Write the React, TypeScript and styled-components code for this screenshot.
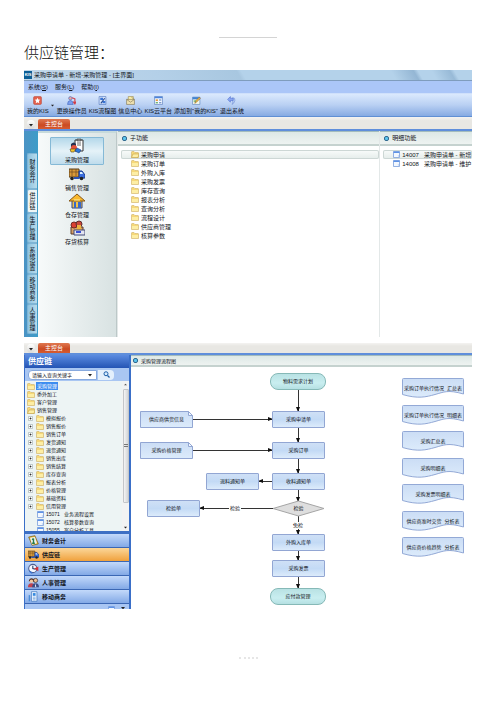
import React from "react";
import styled, { createGlobalStyle, css } from "styled-components";

const GlobalStyle = createGlobalStyle`
  * { box-sizing: border-box; }
  body {
    margin: 0;
    background: #fff;
    color: #10131a;
    font-family: "Liberation Sans", "Noto Sans CJK SC", sans-serif;
    font-size: 6px;
    line-height: 8px;
  }
  button, input { font: inherit; color: inherit; margin: 0; padding: 0; border: 0; background: none; }
  ul { margin: 0; padding: 0; list-style: none; }
  svg { display: block; flex: none; }
`;

const Page = styled.main`
  min-height: 100vh;
  padding: 37px 24px 0;
  display: flex;
  flex-direction: column;
`;
const HeaderRule = styled.hr`
  width: 58px;
  margin: 0 0 0 195px;
  border: 0;
  border-top: 1px solid #d4d4d4;
`;
const Title = styled.h1`
  margin: 3px 0 7px;
  font: 300 15px/22px "Noto Sans CJK SC", sans-serif;
  color: #111;
`;
const Frame = styled.section`
  display: flex;
  flex-direction: column;
  overflow: hidden;
  margin-bottom: 6px;
`;
const TitleBar = styled.header`
  height: 11px;
  display: flex;
  align-items: center;
  gap: 2px;
  white-space: pre;
  border-bottom: 1px solid #7f9cbd;
  background: linear-gradient(60deg, #c3d9ea 0, #b4d0e8 30%, #a8c7e0 48%, #b4d2ea 49%, #b4d2ea 82%, #94b6d4 87%, #b4d2ea 88%, #b4d2ea 91%, #98bad7 95%, #b4d2ea 96%);
`;
const Logo = styled.span`
  width: 8px;
  height: 8px;
  background: #0d5f96;
  color: #fff;
  font: bold 4px/8px "Liberation Sans", sans-serif;
  text-align: center;
`;
const MenuBar = styled.nav`
  height: 12px;
  display: flex;
  align-items: center;
  gap: 7px;
  padding-left: 4px;
  background: #abc6f8;
`;
const MenuButton = styled.button`white-space: nowrap;`;
const ToolBar = styled.div`
  height: 24px;
  display: flex;
  align-items: center;
  gap: 2px;
  padding-left: 3px;
  border-top: 1px solid #cfe0fb;
  border-bottom: 1px solid #5f8fd4;
  background: linear-gradient(#dbe9fd, #b9d0f3 50%, #86aae2);
`;
const ToolButton = styled.button<{ $after?: boolean }>`
  display: flex;
  flex-direction: column;
  align-items: center;
  gap: 2px;
  white-space: nowrap;
  ${(p) => p.$after && css`margin-left: 1px;`}
`;
const TabBar = styled.div<{ $low?: boolean }>`
  height: ${(p) => (p.$low ? 10 : 12)}px;
  display: flex;
  align-items: flex-end;
  gap: 3px;
  padding-left: 3px;
  background: linear-gradient(#f4f3f1, #e8e7e3 30%);
`;
const RoundButton = styled.button`
  width: 8px;
  height: 9px;
  display: grid;
  place-items: center;
  border-radius: 4px;
  background: linear-gradient(#fff, #d8d8d6);
`;
const MainTab = styled.button`
  width: 32px;
  height: 10px;
  color: #fff;
  line-height: 10px;
  border-radius: 2px 2px 0 0;
  background: linear-gradient(#e07850, #cb4a22 60%, #d65c30);
`;
const Body = styled.div<{ $high?: boolean }>`
  display: flex;
  border-top: 2px solid #5f8edb;
  min-height: ${(p) => (p.$high ? 208 : 256)}px;
`;
const Rail = styled.div`
  flex: none;
  width: 14px;
  padding: 22px 1px 2px 3px;
  background: linear-gradient(90deg, #4b93c4, #3d9cc8);
`;
const RailTab = styled.button<{ $h: number; $on?: boolean }>`
  display: block;
  width: 10px;
  height: ${(p) => p.$h}px;
  writing-mode: vertical-rl;
  text-orientation: upright;
  line-height: 10px;
  text-align: center;
  border: 1px solid #7fb5d5;
  border-right: 0;
  border-radius: 2px 0 0 2px;
  background: ${(p) => (p.$on ? "#eef5f6" : "linear-gradient(90deg, #8fc3e0, #b9dcec)")};
`;
const ModulePane = styled.div`
  flex: none;
  width: 79px;
  display: flex;
  flex-direction: column;
  align-items: center;
  padding-top: 4px;
  border-right: 1px solid #bcc8c8;
  border-top: 2px solid #c7dadb;
  background: linear-gradient(90deg, #f7fafa, #d8e2e2);
`;
const ModuleButton = styled.button<{ $on?: boolean }>`
  width: 54px;
  height: ${(p) => (p.$on ? 28 : 27)}px;
  display: flex;
  flex-direction: column;
  align-items: center;
  justify-content: center;
  gap: 2px;
  border: 1px solid ${(p) => (p.$on ? "#85b9d6" : "transparent")};
  border-radius: 1px;
  ${(p) => p.$on && css`background: linear-gradient(#b4d8ea, #e5f2f8 50%, #bfdcec);`}
`;
const Column = styled.section<{ $grow: number }>`
  flex: ${(p) => p.$grow} 1 0;
  min-width: 0;
  overflow: hidden;
  border-left: 1px solid #e3e8e8;
`;
const PaneHead = styled.h2<{ $small?: boolean }>`
  margin: 0;
  height: ${(p) => (p.$small ? 12 : 15)}px;
  display: flex;
  align-items: center;
  gap: 3px;
  padding-left: ${(p) => (p.$small ? 2 : 4)}px;
  font-size: ${(p) => (p.$small ? 5 : 6)}px;
  font-weight: 400;
  border-top: 1px solid #a3bcbd;
  border-bottom: 2px solid #c5d2cf;
  background: linear-gradient(#dde8e6, #eef3f1);
`;
const Bullet = styled.i`
  width: 5px;
  height: 5px;
  border: 1px solid #31688e;
  border-radius: 2px;
  background: #5cc6ee;
`;
const FnList = styled.ul`padding: 4px 0 0 3px;`;
const FnButton = styled.button<{ $on?: boolean }>`
  width: 100%;
  height: 9px;
  display: flex;
  align-items: center;
  gap: 2px;
  padding-left: 10px;
  white-space: pre;
  border-radius: 2px;
  ${(p) => p.$on && css`
    background: linear-gradient(#fafcfb, #e4ecea);
    box-shadow: inset 0 0 0 1px #cdd7d5;
  `}
`;
const Side = styled.aside`
  flex: none;
  width: 107px;
  height: 254px;
  display: flex;
  flex-direction: column;
  border: solid #3a6fc8;
  border-width: 0 2px 0 1px;
  font-size: 5px;
`;
const SideTitle = styled.h2`
  margin: 0;
  padding-left: 3px;
  font-size: 8px;
  line-height: 13px;
  color: #fff;
  background: linear-gradient(#5b8be0, #2454b4);
`;
const Search = styled.form`
  flex: none;
  height: 13px;
  display: flex;
  align-items: center;
  gap: 1px;
  padding-left: 3px;
  background: #a9c6f2;
`;
const SearchBox = styled.div`
  width: 69px;
  height: 10px;
  display: flex;
  align-items: center;
  padding: 0 4px 0 3px;
  border: 1px solid #86a9de;
  border-radius: 4px 0 0 4px;
  background: #fff;
`;
const SearchInput = styled.input`
  flex: 1;
  min-width: 0;
  height: 8px;
  outline: 0;
`;
const SearchButton = styled.button`
  width: 16px;
  height: 10px;
  display: grid;
  place-items: center;
  border-radius: 0 4px 4px 0;
  background: #e4f0fc;
`;
const TreeWrap = styled.div`
  flex: 1;
  min-height: 0;
  display: flex;
  overflow: hidden;
  background: #edf4f4;
`;
const Tree = styled.ul`
  flex: 1;
  min-width: 0;
  padding: 1px 0 0 2px;
`;
const TreeItem = styled.li<{ $level: number }>`
  height: 8px;
  display: flex;
  align-items: center;
  gap: 1px;
  padding-left: ${(p) => (p.$level === 2 ? 10 : 0)}px;
  white-space: pre;
`;
const TreeLabel = styled.button<{ $on?: boolean }>`
  padding: 0 1px;
  white-space: pre;
  ${(p) => p.$on && css`color: #fff; background: #3c8cf0;`}
`;
const Expander = styled.button`
  width: 5px;
  height: 5px;
  margin: 0 2px 0 1px;
`;
const Scroll = styled.div`
  width: 7px;
  display: flex;
  flex-direction: column;
  align-items: center;
  justify-content: space-between;
  padding: 2px 0;
  background: #f2f3f3;
`;
const Thumb = styled.div`
  width: 6px;
  height: 114px;
  display: grid;
  place-items: center;
  margin-bottom: 20px;
  border: 1px solid #c3c6c9;
  border-radius: 1px;
  background: linear-gradient(90deg, #f4f4f4, #d2d5d8);
`;
const Splitter = styled.div`
  flex: none;
  height: 3px;
  background: #3d6fc4;
`;
const NavButton = styled.button<{ $on?: boolean }>`
  flex: none;
  height: 14px;
  display: flex;
  align-items: center;
  gap: 3px;
  padding-left: 3px;
  font-size: 6px;
  font-weight: 700;
  border-bottom: 1px solid #3b67b4;
  background: ${(p) => (p.$on ? "linear-gradient(#fbd79a, #f0a13c)" : "linear-gradient(#c3d9fa, #83a9e6)")};
`;
const NavFoot = styled.div`
  flex: none;
  height: 5px;
  overflow: hidden;
  display: flex;
  justify-content: flex-end;
  gap: 6px;
  padding: 2px 4px 0;
  background: #a9c6f3;
`;
const Flow = styled.section`
  flex: 1;
  min-width: 0;
  font-size: 5px;
`;
const Canvas = styled.div`
  position: relative;
  overflow: hidden;
  height: 242px;
`;
const Links = styled.svg`
  position: absolute;
  left: 0;
  top: 0;
`;
const nodeFill = "linear-gradient(#cfe0f6, #c3daf5 50%, #dcebfb)";
const Node = styled.div<{ $x: number; $y: number; $kind?: "round" | "plain" }>`
  position: absolute;
  left: ${(p) => p.$x}px;
  top: ${(p) => p.$y}px;
  width: ${(p) => (p.$kind === "round" ? 56 : 53)}px;
  height: 17px;
  line-height: 15px;
  text-align: center;
  white-space: nowrap;
  ${(p) =>
    p.$kind === "round"
      ? css`
          border: 1px solid #86b9b7;
          border-radius: 8px;
          background: linear-gradient(#b9e2e4, #c9eef0 60%, #b5e0e2);
        `
      : p.$kind === "plain"
      ? css`border: 1px solid transparent;`
      : css`
          border: 1px solid #92a6d3;
          border-radius: 1px;
          background: ${nodeFill};
        `}
`;
const Caption = styled.span<{ $x: number; $y: number }>`
  position: absolute;
  left: ${(p) => p.$x}px;
  top: ${(p) => p.$y}px;
  width: 12px;
  text-align: center;
  line-height: 7px;
  background: #fff;
`;
const Reports = styled.div`
  position: absolute;
  left: 271px;
  top: 11px;
  height: 179px;
  display: flex;
  flex-direction: column;
  justify-content: space-between;
`;
const Report = styled.div`
  width: 62px;
  height: 20px;
  display: grid;
  white-space: pre;
  text-align: center;
  line-height: 20px;
  > * { grid-area: 1 / 1; }
`;
const Footer = styled.footer`
  margin: 42px 0 0 215px;
  width: 19px;
  border-top: 2px dotted #e6e6e6;
`;

const Caret = ({ size = 4 }: { size?: number }) => (
  <svg width={size} height={size} viewBox="0 0 4 4"><path d="M0 1h4L2 3.4z" fill="#222" /></svg>
);
const Folder = ({ open }: { open?: boolean }) => (
  <svg width="8" height="7" viewBox="0 0 16 14">
    <path d="M1 13V2q0-1 1-1h4l2 2h6q1 0 1 1v9z" fill="#f6d878" stroke="#c9a95a" />
    <path d={open ? "M1 13 4 6h12l-2 7z" : "M2 6h12v6H2z"} fill="#fdeea4" stroke={open ? "#b9963c" : "none"} />
  </svg>
);
const Doc = () => (
  <svg width="7" height="7" viewBox="0 0 14 14">
    <path d="M1 1h12v12H1z" fill="#f3f8ff" stroke="#7b9edb" strokeWidth="1.6" />
    <path d="M1 1h12v3H1z" fill="#5f93e6" />
    <path d="M9 9h3v3z" fill="#a9c4ee" />
  </svg>
);

const toolArt: Record<string, React.ReactNode> = {
  star: <><rect x="1" y="1" width="14" height="14" rx="2" fill="#e4604c" stroke="#b84a3c" /><path d="m8 3 1.5 3.4 3.5.4-2.600 2.300.7 3.700L8 11l-3.100 1.800.7-3.700L3 6.800l3.500-.4z" fill="#fff" /></>,
  users: <><circle cx="6" cy="4" r="3" fill="#e9a9a3" stroke="#395fba" /><path d="M1 15q0-7 5-7t5 7z" fill="#7da0ef" stroke="#395fba" /><path d="m9 3 5 2v8m-3-3 3 4 2-4" fill="none" stroke="#d23c47" strokeWidth="2" /></>,
  flow: <><path d="M2 1h12v14H2z" fill="#dbe8fc" stroke="#3f68b6" /><path d="M4 3h5v4H4zm4 6h5v4H8z" fill="#3974d4" /><path d="m5 13 7-9" stroke="#294b91" strokeWidth="2" /></>,
  mail: <><path d="M4 1h9v9H4z" fill="#fff2a8" stroke="#8d7b42" /><path d="M1 6h14v9H1z" fill="#eee1b0" stroke="#786d49" /><path d="m1 6 7 5 7-5M10 2l3 3" fill="none" stroke="#786d49" /></>,
  cloud: <><path d="M1 1h14v14H1z" fill="#f4f8ff" stroke="#486fb6" /><path d="M1 1h14v3H1z" fill="#4d84da" /><path d="M3 6h4v3H3z" fill="#e89b39" /><path d="M3 11h4v2H3z" fill="#54a650" /><path d="M9 7h4M9 12h4" stroke="#5579b6" strokeWidth="2" /></>,
  add: <><path d="M1 2h13v13H1z" fill="#f4f8e9" stroke="#4b75b7" /><path d="M1 2h13v4H1z" fill="#3f83d3" /><path d="m5 13 1-4 7-7 2 2-7 7z" fill="#efb844" stroke="#8e632e" /><path d="M3 8h4v2H3z" fill="#51a35a" /></>,
  exit: <><path d="M10 3q5 0 4 5t-5 7q2-4 1-7z" fill="#b9cff3" stroke="#6f8bd5" /><path d="M1 6 6 1v3h5v4H6v3z" fill="#8ba7f0" stroke="#4e6fd0" /></>,
};
const moduleArt: Record<string, React.ReactNode> = {
  clipboard: <><path d="M6 2h8v11H6z" fill="#fff" stroke="#333" /><path d="M8 1h4v2H8z" fill="#999" stroke="#333" strokeWidth=".6" /><path d="M8 5h4M8 7h4" stroke="#444" strokeWidth=".8" /><path d="M2 6q3-3 5 0v3H2z" fill="#24314f" /><circle cx="5" cy="10" r="3" fill="#e6523a" /><path d="M1 11h6l-2 3H2z" fill="#f4c62e" stroke="#51401d" strokeWidth=".6" /><path d="m8 10 4 2-2 3-4-2z" fill="#2b79dc" stroke="#173c7d" strokeWidth=".6" /></>,
  truck: <><path d="M0 3h10v8H0z" fill="#d99a38" stroke="#5b3f1d" /><path d="M0 6h10M3 3v7M7 3v7" stroke="#6e4920" strokeWidth=".7" /><path d="M10 5h3l3 4v3h-6z" fill="#3a6ddd" stroke="#1b3c8c" /><path d="M11 6h2l1 2h-3z" fill="#d9efff" /><circle cx="3" cy="12.500" r="1.800" fill="#222" /><circle cx="12.500" cy="12.500" r="1.800" fill="#222" /><path d="M5 12h5" stroke="#2852b5" strokeWidth="2" /></>,
  house: <><path d="M3 7h10v8H3z" fill="#f2c34c" stroke="#344480" /><path d="M0 8 8 1l8 7z" fill="#f8b82d" stroke="#865819" /><path d="M5 9h2v6H5zm4 0h3v6H9z" fill="#3868c7" /><path d="M5 7h6" stroke="#fff1a2" /></>,
  boxes: <><path d="M2 7h12v7H2z" fill="#d6a066" stroke="#5a3a26" /><circle cx="5" cy="5" r="3" fill="#db4031" stroke="#702b24" /><circle cx="10" cy="4" r="3" fill="#c9473a" stroke="#5e2e2e" /><path d="M8 5h4v5H8z" fill="#efb33d" /><path d="M5 10h11v5H5z" fill="#e3e5f1" stroke="#424b76" /><path d="M7 12h5" stroke="#3a50d7" strokeWidth="2" /></>,
  book: <><path d="m1 3 9-2 5 12-9 2z" fill="#f1bd2c" stroke="#705814" /><path d="m3 4 7-1 3 9-7 2z" fill="#eef3f2" /><path d="M8 5v7m-2-5 2-2m-2 7h4" stroke="#257c4a" strokeWidth="2" fill="none" /></>,
  clock: <><circle cx="7" cy="8" r="6" fill="#f6f8ff" stroke="#4d5f91" strokeWidth="1.500" /><path d="M7 4v4l4 1" fill="none" stroke="#25365f" strokeWidth="1.500" /><path d="m9 8 6-3v7z" fill="#d62f37" /><path d="M2 12l4 3" stroke="#3974d4" strokeWidth="2" /></>,
  people: <><path d="M1 6q1-5 5-4 4 0 3 5z" fill="#4b2d24" /><circle cx="5" cy="6" r="2.500" fill="#f3c7a2" /><path d="M0 15q0-6 5-6t5 6z" fill="#c3434e" /><circle cx="11" cy="5" r="3" fill="#edbd94" stroke="#342822" /><path d="M6 15q0-6 5-6t5 6z" fill="#3e4c84" /><path d="m11 9-1 5h2z" fill="#fff" /></>,
  phone: <><path d="M5 1h8v14H5z" fill="#edf5ff" stroke="#3e76bd" /><path d="M7 3h4v4H7z" fill="#3689df" /><path d="M7 9h4M7 11h4M7 13h4" stroke="#6d9ed8" /><path d="M2 6v9" stroke="#4a8dd8" strokeWidth="2" /></>,
};
const Art = ({ name, size }: { name: string; size: number }) => (
  <svg width={size} height={size} viewBox="0 0 16 16">{toolArt[name] ?? moduleArt[name]}</svg>
);

const tools = [
  ["star", "我的KIS"], ["users", "更换操作员"], ["flow", "KIS流程图"], ["mail", "信息中心"],
  ["cloud", "KIS云平台"], ["add", "添加到\"我的KIS\""], ["exit", "退出系统"],
];
const rails: [string, number][] = [["财务会计", 36], ["供应链", 24], ["生产管理", 30], ["系统设置", 31], ["移动商务", 30], ["人事管理", 30]];
const modules = [["clipboard", "采购管理"], ["truck", "销售管理"], ["house", "仓存管理"], ["boxes", "存货核算"]];
const functions = ["采购申请", "采购订单", "外购入库", "采购发票", "库存查询", "报表分析", "查询分析", "流程设计", "供应商管理", "核算参数"];
const treeTop = ["采购管理", "委外加工", "客户管理", "销售管理"];
const treeSub = ["模拟报价", "销售报价", "销售订单", "发货通知", "退货通知", "销售出库", "销售结算", "库存查询", "报表分析", "价格管理", "基础资料", "信用管理"];
const treeDocs = ["15071   业务流程设置", "15072   核算参数查询", "15055   客户分析工具"];
const navs = [["book", "财务会计"], ["truck", "供应链"], ["clock", "生产管理"], ["people", "人事管理"], ["phone", "移动商务"]];
const reports = ["采购订单执行情况  汇总表", "采购订单执行情况  明细表", "采购汇总表", "采购明细表", "采购发票明细表", "供应商准时交货  分析表", "供应商价格趋势  分析表"];

const ConsoleTabs = ({ low }: { low?: boolean }) => (
  <TabBar $low={low}>
    <RoundButton aria-label="菜单"><Caret /></RoundButton>
    <MainTab>主控台</MainTab>
  </TabBar>
);

const arrows = [
  "M167 23V44", "M167 61V75", "M167 92V106", "M167 123V134", "M167 149V167", "M167 184V193", "M167 210V221",
  "M62 52H141", "M62 83H141", "M141 114H128", "M142 141H69",
];

const FlowChart = () => (
  <Canvas>
    <Links width="341" height="242" viewBox="0 0 341 242">
      <defs>
        <marker id="tip" markerUnits="userSpaceOnUse" markerWidth="6" markerHeight="6" refX="4" refY="2" orient="auto">
          <path d="M0 0 5 2 0 4z" fill="#111" />
        </marker>
        <linearGradient id="sheet" x2="0" y2="1">
          <stop stopColor="#cbddf5" /><stop offset="1" stopColor="#dcebfb" />
        </linearGradient>
      </defs>
      {arrows.map((d) => <path key={d} d={d} stroke="#333" strokeWidth="1" fill="none" shapeRendering="crispEdges" markerEnd="url(#tip)" />)}
      <path d="m142 141.500 25.500-7.500 25.500 7.500-25.500 7.500z" fill="#dedede" stroke="#a5a5a5" />
      {[44, 75].map((y) => (
        <g key={y} transform={`translate(9 ${y})`} stroke="#92a6d3">
          <path d="M.5.5h48l4 4v12H.5z" fill="url(#sheet)" />
          <path d="M48.500.5v4h4z" fill="#f4f9ff" />
        </g>
      ))}
    </Links>
    <Node $x={139} $y={6} $kind="round">物料需求计划</Node>
    <Node $x={141} $y={44}>采购申请单</Node>
    <Node $x={9} $y={44} $kind="plain">供应商供货信息</Node>
    <Node $x={141} $y={75}>采购订单</Node>
    <Node $x={9} $y={75} $kind="plain">采购价格管理</Node>
    <Node $x={141} $y={106}>收料通知单</Node>
    <Node $x={75} $y={106}>退料通知单</Node>
    <Node $x={16} $y={133}>检验单</Node>
    <Node $x={141} $y={133} $kind="plain">检验</Node>
    <Node $x={141} $y={167}>外购入库单</Node>
    <Node $x={141} $y={193}>采购发票</Node>
    <Node $x={139} $y={221} $kind="round">应付款管理</Node>
    <Caption $x={98} $y={138}>检验</Caption>
    <Caption $x={161} $y={155}>免检</Caption>
    <Reports>
      {reports.map((r) => (
        <Report key={r}>
          <svg width="62" height="20" viewBox="0 0 62 20">
            <path d="M.5 16.500V1.500q0-1 1-1h59q1 0 1 1v14.500C46 11.500 42 14 33 16.500S16 21 .5 16.500z" fill="url(#sheet)" stroke="#93a9d6" />
          </svg>
          <span>{r}</span>
        </Report>
      ))}
    </Reports>
  </Canvas>
);

export default function App() {
  return (
    <Page>
      <GlobalStyle />
      <HeaderRule />
      <Title>供应链管理：</Title>

      <Frame>
        <TitleBar><Logo>KIS</Logo>采购申请单 - 新增-采购管理 - [主界面]</TitleBar>
        <MenuBar>
          {["系统(S)", "服务(L)", "帮助(I)"].map((m) => (
            <MenuButton key={m}>{m.slice(0, 3)}<u>{m[3]}</u>)</MenuButton>
          ))}
        </MenuBar>
        <ToolBar>
          {tools.map(([icon, label], i) => (
            <React.Fragment key={icon}>
              <ToolButton $after={i === 1}><Art name={icon} size={9} />{label}</ToolButton>
              {i === 0 && <Caret size={3} />}
            </React.Fragment>
          ))}
        </ToolBar>
        <ConsoleTabs />
        <Body $high>
          <Rail>
            {rails.map(([label, h]) => <RailTab key={label} $h={h} $on={label === "供应链"}>{label}</RailTab>)}
          </Rail>
          <ModulePane>
            {modules.map(([icon, label], i) => (
              <ModuleButton key={icon} $on={i === 0}><Art name={icon} size={16} />{label}</ModuleButton>
            ))}
          </ModulePane>
          <Column $grow={74}>
            <PaneHead><Bullet />子功能</PaneHead>
            <FnList>
              {functions.map((f, i) => <li key={f}><FnButton $on={i === 0}><Folder open={i === 0} />{f}</FnButton></li>)}
            </FnList>
          </Column>
          <Column $grow={26}>
            <PaneHead><Bullet />明细功能</PaneHead>
            <FnList>
              <li><FnButton $on><Doc />14007   采购申请单 - 新增</FnButton></li>
              <li><FnButton><Doc />14008   采购申请单 - 维护</FnButton></li>
            </FnList>
          </Column>
        </Body>
      </Frame>

      <Frame>
        <ConsoleTabs low />
        <Body>
          <Side>
            <SideTitle>供应链</SideTitle>
            <Search onSubmit={(e) => e.preventDefault()}>
              <SearchBox>
                <SearchInput aria-label="查询关键字" defaultValue="请输入查询关键字" />
                <Caret />
              </SearchBox>
              <SearchButton aria-label="查询">
                <svg width="7" height="7" viewBox="0 0 14 14"><circle cx="6" cy="5.500" r="4" fill="#d5ecff" stroke="#1d5fa8" strokeWidth="2" /><path d="m9 9 4 4" stroke="#1d5fa8" strokeWidth="2.500" /></svg>
              </SearchButton>
            </Search>
            <TreeWrap>
              <Tree>
                {treeTop.map((t, i) => (
                  <TreeItem key={t} $level={0}><Folder open={i === 3} /><TreeLabel $on={i === 0}>{t}</TreeLabel></TreeItem>
                ))}
                {treeSub.map((t) => (
                  <TreeItem key={t} $level={1}>
                    <Expander aria-label="展开">
                      <svg width="5" height="5" viewBox="0 0 10 10"><path d="M1 1h8v8H1z" fill="#fff" stroke="#8b9a9f" /><path d="M3 5h4M5 3v4" stroke="#222" strokeWidth="1.500" /></svg>
                    </Expander>
                    <Folder /><TreeLabel>{t}</TreeLabel>
                  </TreeItem>
                ))}
                {treeDocs.map((t) => <TreeItem key={t} $level={2}><Doc /><TreeLabel>{t}</TreeLabel></TreeItem>)}
              </Tree>
              <Scroll>
                <svg width="3" height="3" viewBox="0 0 4 4"><path d="M0 3h4L2 1z" fill="#555" /></svg>
                <Thumb><svg width="4" height="4" viewBox="0 0 4 4"><path d="M0 .5h4M0 2.500h4" stroke="#777" /></svg></Thumb>
                <Caret size={3} />
              </Scroll>
            </TreeWrap>
            <Splitter />
            {navs.map(([icon, label]) => (
              <NavButton key={icon} $on={label === "供应链"}><Art name={icon} size={11} />{label}</NavButton>
            ))}
            <NavFoot><Doc /><Caret /></NavFoot>
          </Side>
          <Flow>
            <PaneHead $small><Bullet />采购管理流程图</PaneHead>
            <FlowChart />
          </Flow>
        </Body>
      </Frame>
      <Footer />
    </Page>
  );
}
